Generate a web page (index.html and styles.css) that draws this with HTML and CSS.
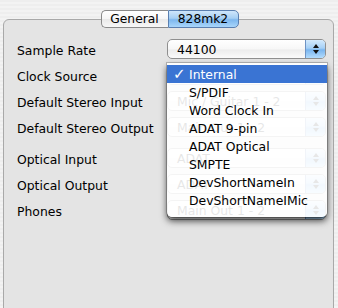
FILE: index.html
```html
<!DOCTYPE html>
<html>
<head>
<meta charset="utf-8">
<link rel="stylesheet" href="styles.css">
</head>
<body>
<div class="window">
  <div class="tabs">
    <div class="tab first">General</div>
    <div class="tab last sel">828mk2</div>
  </div>
  <div class="box">
    <div class="group">
      <div class="row"><span class="label">Sample Rate</span><div class="popup"><span class="val">44100</span><span class="step"><i class="up"></i><i class="down"></i></span></div></div>
      <div class="row"><span class="label">Clock Source</span><div class="popup"><span class="val">Internal</span><span class="step"><i class="up"></i><i class="down"></i></span></div></div>
      <div class="row"><span class="label">Default Stereo Input</span><div class="popup"><span class="val">Mic / Guitar 1 - 2</span><span class="step"><i class="up"></i><i class="down"></i></span></div></div>
      <div class="row"><span class="label">Default Stereo Output</span><div class="popup"><span class="val">Main Out 1 - 2</span><span class="step"><i class="up"></i><i class="down"></i></span></div></div>
    </div>
    <div class="group second">
      <div class="row"><span class="label">Optical Input</span><div class="popup"><span class="val">ADAT</span><span class="step"><i class="up"></i><i class="down"></i></span></div></div>
      <div class="row"><span class="label">Optical Output</span><div class="popup"><span class="val">ADAT</span><span class="step"><i class="up"></i><i class="down"></i></span></div></div>
      <div class="row"><span class="label">Phones</span><div class="popup"><span class="val">Main Out 1 - 2</span><span class="step"><i class="up"></i><i class="down"></i></span></div></div>
    </div>
  </div>
  <div class="menu">
    <div class="item hi"><span class="check">✓</span>Internal</div>
    <div class="item">S/PDIF</div>
    <div class="item">Word Clock In</div>
    <div class="item">ADAT 9-pin</div>
    <div class="item">ADAT Optical</div>
    <div class="item">SMPTE</div>
    <div class="item">DevShortNameIn</div>
    <div class="item">DevShortNameIMic</div>
  </div>
</div>
</body>
</html>
```

FILE: styles.css
```css
html, body {
  margin: 0;
  padding: 0;
}
body {
  width: 338px;
  height: 308px;
  overflow: hidden;
  background: repeating-linear-gradient(#eeeeee 0 2px, #f3f3f3 2px 4px);
  font-family: "DejaVu Sans", sans-serif;
  color: #000;
}
.window {
  position: relative;
  height: 308px;
  padding-top: 10px;
  box-sizing: border-box;
}
.tabs {
  position: relative;
  z-index: 2;
  display: flex;
  justify-content: center;
  height: 18px;
  padding-left: 1px;
}
.tab {
  height: 18px;
  box-sizing: border-box;
  border: 1px solid #8a8a8a;
  font-size: 12.3px;
  line-height: 17px;
  text-align: center;
  background: linear-gradient(#ffffff 0%, #f6f6f6 50%, #e9e9e9 51%, #f7f7f7 100%);
}
.tab.first {
  width: 67px;
  border-radius: 5px 0 0 5px;
  border-right: none;
}
.tab.last {
  width: 71px;
  border-radius: 0 5px 5px 0;
}
.tab.sel {
  border-color: #5a7fb0;
  background: linear-gradient(#cfe6fb 0%, #a6cff3 45%, #7db7ee 55%, #a9d6fb 100%);
}
.box {
  margin: -9px 4px 0 3px;
  height: 300px;
  box-sizing: border-box;
  border: 1px solid #a9a9a9;
  border-radius: 6px;
  background: #e4e4e4;
  padding: 19px 0 0 13px;
}
.group {
  display: flex;
  flex-direction: column;
  gap: 6px;
}
.group.second {
  margin-top: 11px;
}
.row {
  display: grid;
  grid-template-columns: 150px 159px;
  height: 20px;
  align-items: center;
}
.label {
  font-size: 12.4px;
  padding-top: 2px;
}
.popup {
  position: relative;
  height: 20px;
  box-sizing: border-box;
  border: 1px solid #8f8f8f;
  border-radius: 5px;
  background: linear-gradient(#ffffff 0%, #f7f7f7 50%, #ececec 55%, #fafafa 100%);
  display: flex;
  align-items: center;
  overflow: hidden;
}
.val {
  flex: 1;
  padding-left: 9px;
  padding-top: 1px;
  font-size: 12.4px;
}
.step {
  width: 19px;
  height: 18px;
  border-left: 1px solid #6e93c4;
  background: linear-gradient(#d4eafd 0%, #a6d0f6 45%, #79b5ef 55%, #b3dcfd 100%);
  display: flex;
  flex-direction: column;
  align-items: center;
  justify-content: center;
  gap: 2px;
}
.step i {
  display: block;
  width: 0;
  height: 0;
  border-left: 3px solid transparent;
  border-right: 3px solid transparent;
}
.step i.up {
  border-bottom: 4px solid #111;
}
.step i.down {
  border-top: 4px solid #111;
}
.menu {
  position: absolute;
  left: 167px;
  top: 63px;
  width: 160px;
  height: 154px;
  box-sizing: border-box;
  padding-top: 2px;
  background: rgba(255, 255, 255, 0.9);
  border-radius: 0 0 5px 5px;
  box-shadow: 0 0 0 1px rgba(0, 0, 0, 0.2), 0 4px 7px rgba(0, 0, 0, 0.7);
  z-index: 5;
}
.item {
  position: relative;
  height: 18px;
  line-height: 19px;
  padding-left: 22px;
  font-size: 12.4px;
}
.item.hi {
  background: #3a74d3;
  color: #fff;
}
.check {
  position: absolute;
  left: 6px;
  top: 0;
  font-size: 15px;
  font-weight: bold;
}
```
